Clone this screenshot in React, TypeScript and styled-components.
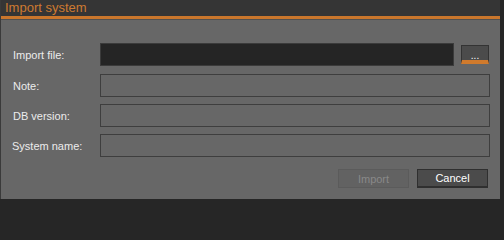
import styled, { createGlobalStyle } from "styled-components";

const GlobalStyle = createGlobalStyle`
  html, body {
    margin: 0;
    padding: 0;
    background: #262626;
  }
  body {
    font-family: "Liberation Sans", Arial, sans-serif;
  }
`;

const Window = styled.div`
  width: 500px;
  height: 199px;
  display: flex;
  flex-direction: column;
  background: #676767;
  border-left: 1px solid #3a3a3a;
  box-sizing: border-box;
`;

const TitleBar = styled.div`
  height: 16px;
  background: #353535;
  color: #cd7a31;
  font-size: 13px;
  line-height: 16px;
  padding-left: 4px;
  border-bottom: 3px solid #c9762c;
  box-shadow: 0 1px 0 #505050;
  flex-shrink: 0;
`;

const Body = styled.div`
  flex: 1;
  display: flex;
  flex-direction: column;
  padding: 24px 10px 0 11px;
`;

const Form = styled.div`
  display: grid;
  grid-template-columns: 88px 1fr;
  row-gap: 7px;
`;

const Label = styled.label<{ $shift?: number }>`
  color: #ececec;
  font-size: 11px;
  display: flex;
  align-items: center;
  padding-left: ${(p) => 1 + (p.$shift ?? 0)}px;
  height: 23px;
`;

const FieldRow = styled.div<{ $extra?: number }>`
  display: flex;
  gap: 7px;
  align-items: center;
  height: 23px;
  margin-bottom: ${(p) => p.$extra ?? 0}px;
`;

const Field = styled.div<{ $filled?: boolean }>`
  flex: 1;
  height: 23px;
  box-sizing: border-box;
  background: ${(p) => (p.$filled ? "#252525" : "#676767")};
  border: 1px solid ${(p) => (p.$filled ? "#3b3b3b" : "#3e3e3e")};
`;

const BrowseButton = styled.button`
  width: 28px;
  height: 19px;
  box-sizing: border-box;
  background: #4b4b4b;
  border: 1px solid #333;
  border-bottom: 4px solid #d07a2c;
  color: #fff;
  font-family: "Liberation Sans", Arial, sans-serif;
  font-size: 10px;
  line-height: 8px;
  padding: 0;
  display: flex;
  align-items: flex-end;
  justify-content: center;
  margin-right: 1px;
`;

const Footer = styled.div`
  display: flex;
  justify-content: flex-end;
  gap: 8px;
  margin-top: 12px;
  padding-right: 2px;
`;

const Button = styled.button<{ $primary?: boolean }>`
  width: 71px;
  height: 19px;
  box-sizing: border-box;
  font-family: "Liberation Sans", Arial, sans-serif;
  font-size: 11px;
  padding: 0;
  background: ${(p) => (p.$primary ? "#4b4b4b" : "#626262")};
  color: ${(p) => (p.$primary ? "#ffffff" : "#898989")};
  border: 1px solid ${(p) => (p.$primary ? "#2f2f2f" : "#5b5b5b")};
  border-bottom-width: ${(p) => (p.$primary ? 2 : 1)}px;
`;

export default function App() {
  return (
    <>
      <GlobalStyle />
      <Window>
        <TitleBar>Import system</TitleBar>
        <Body>
          <Form>
            <Label>Import file:</Label>
            <FieldRow $extra={1}>
              <Field $filled />
              <BrowseButton>...</BrowseButton>
            </FieldRow>
            <Label>Note:</Label>
            <FieldRow>
              <Field />
            </FieldRow>
            <Label>DB version:</Label>
            <FieldRow>
              <Field />
            </FieldRow>
            <Label $shift={-2}>System name:</Label>
            <FieldRow>
              <Field />
            </FieldRow>
          </Form>
          <Footer>
            <Button disabled>Import</Button>
            <Button $primary>Cancel</Button>
          </Footer>
        </Body>
      </Window>
    </>
  );
}
